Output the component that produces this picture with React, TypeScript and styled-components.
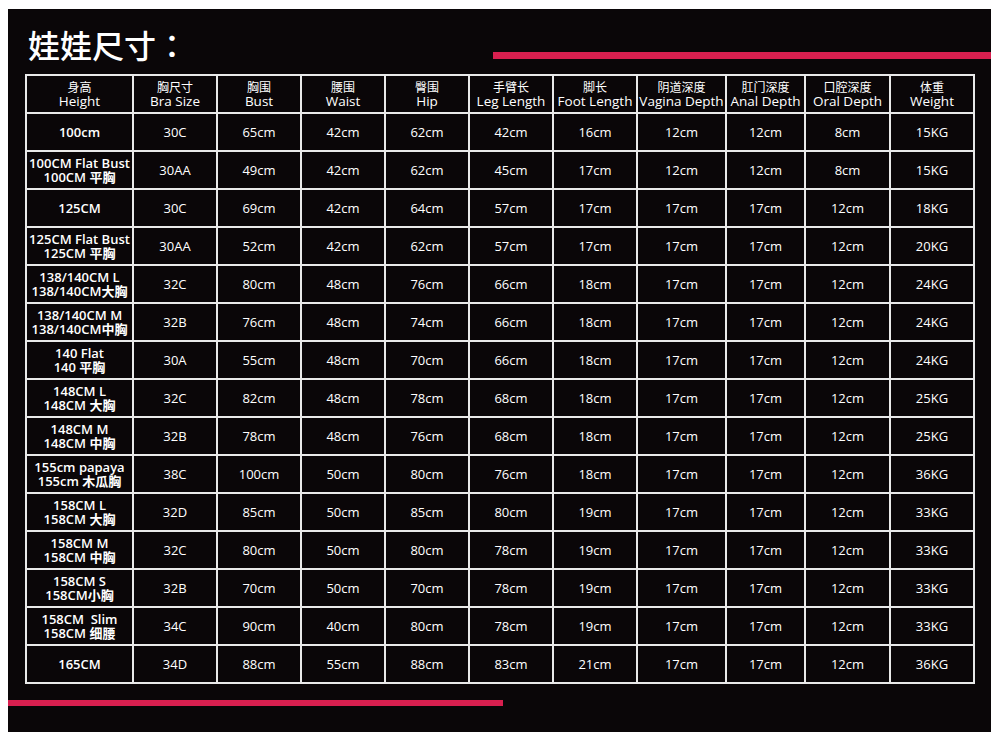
import styled, { createGlobalStyle } from 'styled-components';

const GlobalStyle = createGlobalStyle`
    html, body {
        margin: 0;
        padding: 0;
        background: #ffffff;
    }
    body {
        font-family: 'Open Sans', 'Noto Sans CJK SC', sans-serif;
    }
`;

const Panel = styled.div`
    margin: 9px 0 0 8px;
    width: 983px;
    height: 723px;
    background: #0a0608;
    display: flex;
    flex-direction: column;
    box-sizing: border-box;
`;

const Header = styled.div`
    display: flex;
    align-items: flex-start;
    height: 65px;
`;

const Title = styled.h1`
    margin: 19px 0 0 20px;
    font-family: 'Noto Sans CJK TC', 'Noto Sans CJK SC', sans-serif;
    font-size: 32px;
    line-height: 1;
    font-weight: 500;
    color: #ffffff;
`;

const AccentBar = styled.div<{ $width: number; $top: number }>`
    width: ${({ $width }) => $width}px;
    height: 7px;
    margin-top: ${({ $top }) => $top}px;
    background: #d81f4f;
`;

const TopBar = styled(AccentBar)`
    margin-left: auto;
`;

const SizeTable = styled.table`
    margin-left: 17px;
    width: 948px;
    border-collapse: collapse;
    table-layout: fixed;
    border: 2px solid #e9e9e9;
    color: #ffffff;
`;

const HeadCell = styled.th`
    height: 36px;
    padding: 0;
    border: 2px solid #e9e9e9;
    font-size: 13.5px;
    font-weight: 400;
    line-height: 15px;
    text-align: center;
    white-space: nowrap;
    overflow: hidden;
`;

const Cn = styled.span`
    display: block;
    font-family: 'Noto Sans CJK SC', sans-serif;
    font-size: 12px;
`;

const En = styled.span`
    display: block;
`;

const Cell = styled.td<{ $strong?: boolean }>`
    height: 36px;
    padding: 0;
    border: 2px solid #e9e9e9;
    font-size: 13px;
    font-weight: ${({ $strong }) => ($strong ? 600 : 400)};
    line-height: 14px;
    text-align: center;
    white-space: nowrap;
    overflow: hidden;
`;

const Line = styled.span`
    display: block;
    white-space: pre;
`;

const BottomBar = styled(AccentBar)`
    height: 6px;
`;

const columns: [string, string, number][] = [
    ['身高', 'Height', 107],
    ['胸尺寸', 'Bra Size', 84],
    ['胸围', 'Bust', 84],
    ['腰围', 'Waist', 84],
    ['臀围', 'Hip', 84],
    ['手臂长', 'Leg Length', 84],
    ['脚长', 'Foot Length', 84],
    ['阴道深度', 'Vagina Depth', 89],
    ['肛门深度', 'Anal Depth', 79],
    ['口腔深度', 'Oral Depth', 85],
    ['体重', 'Weight', 84],
];

const rows: string[][] = [
    ['100cm', '30C', '65cm', '42cm', '62cm', '42cm', '16cm', '12cm', '12cm', '8cm', '15KG'],
    ['100CM Flat Bust|100CM 平胸', '30AA', '49cm', '42cm', '62cm', '45cm', '17cm', '12cm', '12cm', '8cm', '15KG'],
    ['125CM', '30C', '69cm', '42cm', '64cm', '57cm', '17cm', '17cm', '17cm', '12cm', '18KG'],
    ['125CM Flat Bust|125CM 平胸', '30AA', '52cm', '42cm', '62cm', '57cm', '17cm', '17cm', '17cm', '12cm', '20KG'],
    ['138/140CM L|138/140CM大胸', '32C', '80cm', '48cm', '76cm', '66cm', '18cm', '17cm', '17cm', '12cm', '24KG'],
    ['138/140CM M|138/140CM中胸', '32B', '76cm', '48cm', '74cm', '66cm', '18cm', '17cm', '17cm', '12cm', '24KG'],
    ['140 Flat|140 平胸', '30A', '55cm', '48cm', '70cm', '66cm', '18cm', '17cm', '17cm', '12cm', '24KG'],
    ['148CM L|148CM 大胸', '32C', '82cm', '48cm', '78cm', '68cm', '18cm', '17cm', '17cm', '12cm', '25KG'],
    ['148CM M|148CM 中胸', '32B', '78cm', '48cm', '76cm', '68cm', '18cm', '17cm', '17cm', '12cm', '25KG'],
    ['155cm papaya|155cm 木瓜胸', '38C', '100cm', '50cm', '80cm', '76cm', '18cm', '17cm', '17cm', '12cm', '36KG'],
    ['158CM L|158CM 大胸', '32D', '85cm', '50cm', '85cm', '80cm', '19cm', '17cm', '17cm', '12cm', '33KG'],
    ['158CM M|158CM 中胸', '32C', '80cm', '50cm', '80cm', '78cm', '19cm', '17cm', '17cm', '12cm', '33KG'],
    ['158CM S|158CM小胸', '32B', '70cm', '50cm', '70cm', '78cm', '19cm', '17cm', '17cm', '12cm', '33KG'],
    ['158CM  Slim|158CM 细腰', '34C', '90cm', '40cm', '80cm', '78cm', '19cm', '17cm', '17cm', '12cm', '33KG'],
    ['165CM', '34D', '88cm', '55cm', '88cm', '83cm', '21cm', '17cm', '17cm', '12cm', '36KG'],
];

export default function App() {
    return (
        <>
            <GlobalStyle />
            <Panel>
                <Header>
                    <Title>娃娃尺寸：</Title>
                    <TopBar $width={498} $top={43} />
                </Header>

                <SizeTable>
                    <colgroup>
                        {columns.map(([cn, , width]) => (
                            <col key={cn} style={{ width }} />
                        ))}
                    </colgroup>
                    <thead>
                        <tr>
                            {columns.map(([cn, en]) => (
                                <HeadCell key={cn}>
                                    <Cn>{cn}</Cn>
                                    <En>{en}</En>
                                </HeadCell>
                            ))}
                        </tr>
                    </thead>
                    <tbody>
                        {rows.map((row, r) => (
                            <tr key={r}>
                                {row.map((value, c) => (
                                    <Cell key={c} $strong={c === 0}>
                                        {value.split('|').map((part) => (
                                            <Line key={part}>{part}</Line>
                                        ))}
                                    </Cell>
                                ))}
                            </tr>
                        ))}
                    </tbody>
                </SizeTable>

                <BottomBar $width={495} $top={16} />
            </Panel>
        </>
    );
}
